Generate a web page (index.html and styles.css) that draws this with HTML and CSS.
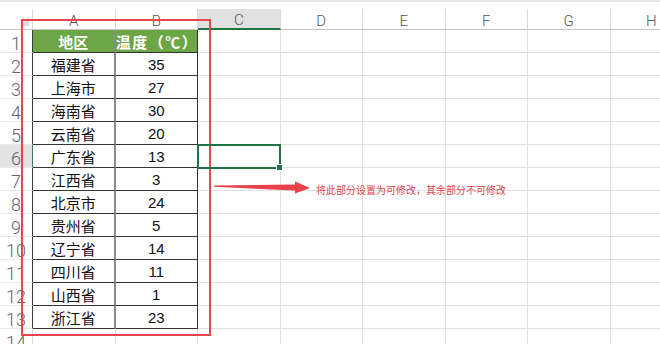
FILE: index.html
```html
<!DOCTYPE html>
<html lang="zh-CN">
<head>
    <meta charset="UTF-8">
    <title>区域温度</title>
    <link rel="stylesheet" href="styles.css">
</head>
<body>
    <div class="topbar"></div>
    <div class="sheet">
        <div class="corner"></div>
        <div class="col-head">A</div>
        <div class="col-head">B</div>
        <div class="col-head sel">C</div>
        <div class="col-head">D</div>
        <div class="col-head">E</div>
        <div class="col-head">F</div>
        <div class="col-head">G</div>
        <div class="col-head">H</div>

        <div class="row-head edge">1</div>
        <div class="data name head">地区</div>
        <div class="data head"><span class="unit">温度（℃）</span></div>
        <div class="cell"></div><div class="cell"></div><div class="cell"></div><div class="cell"></div><div class="cell"></div><div class="cell"></div>

        <div class="row-head edge">2</div>
        <div class="data name">福建省</div>
        <div class="data num">35</div>
        <div class="cell"></div><div class="cell"></div><div class="cell"></div><div class="cell"></div><div class="cell"></div><div class="cell"></div>

        <div class="row-head edge">3</div>
        <div class="data name">上海市</div>
        <div class="data num">27</div>
        <div class="cell"></div><div class="cell"></div><div class="cell"></div><div class="cell"></div><div class="cell"></div><div class="cell"></div>

        <div class="row-head edge">4</div>
        <div class="data name">海南省</div>
        <div class="data num">30</div>
        <div class="cell"></div><div class="cell"></div><div class="cell"></div><div class="cell"></div><div class="cell"></div><div class="cell"></div>

        <div class="row-head edge">5</div>
        <div class="data name">云南省</div>
        <div class="data num">20</div>
        <div class="cell"></div><div class="cell"></div><div class="cell"></div><div class="cell"></div><div class="cell"></div><div class="cell"></div>

        <div class="row-head edge sel">6</div>
        <div class="data name">广东省</div>
        <div class="data num">13</div>
        <div class="cell"></div><div class="cell"></div><div class="cell"></div><div class="cell"></div><div class="cell"></div><div class="cell"></div>

        <div class="row-head edge">7</div>
        <div class="data name">江西省</div>
        <div class="data num">3</div>
        <div class="cell"></div><div class="cell"></div><div class="cell"></div><div class="cell"></div><div class="cell"></div><div class="cell"></div>

        <div class="row-head edge">8</div>
        <div class="data name">北京市</div>
        <div class="data num">24</div>
        <div class="cell"></div><div class="cell"></div><div class="cell"></div><div class="cell"></div><div class="cell"></div><div class="cell"></div>

        <div class="row-head edge">9</div>
        <div class="data name">贵州省</div>
        <div class="data num">5</div>
        <div class="cell"></div><div class="cell"></div><div class="cell"></div><div class="cell"></div><div class="cell"></div><div class="cell"></div>

        <div class="row-head edge">10</div>
        <div class="data name">辽宁省</div>
        <div class="data num">14</div>
        <div class="cell"></div><div class="cell"></div><div class="cell"></div><div class="cell"></div><div class="cell"></div><div class="cell"></div>

        <div class="row-head edge">11</div>
        <div class="data name">四川省</div>
        <div class="data num">11</div>
        <div class="cell"></div><div class="cell"></div><div class="cell"></div><div class="cell"></div><div class="cell"></div><div class="cell"></div>

        <div class="row-head edge">12</div>
        <div class="data name">山西省</div>
        <div class="data num">1</div>
        <div class="cell"></div><div class="cell"></div><div class="cell"></div><div class="cell"></div><div class="cell"></div><div class="cell"></div>

        <div class="row-head edge">13</div>
        <div class="data name">浙江省</div>
        <div class="data num">23</div>
        <div class="cell"></div><div class="cell"></div><div class="cell"></div><div class="cell"></div><div class="cell"></div><div class="cell"></div>

        <div class="row-head">14</div>
        <div class="cell"></div><div class="cell"></div>
        <div class="cell"></div><div class="cell"></div><div class="cell"></div><div class="cell"></div><div class="cell"></div><div class="cell"></div>
    </div>

    <!-- overlays drawn on top of the sheet -->
    <div class="frame"></div>
    <div class="selection"></div>
    <svg class="arrow" width="100" height="16" viewBox="0 0 100 16">
        <polygon points="0,5.5 81,4.5 81,1.5 96,8 81,13.5 81,10.5 0,6.8" fill="#e8414a"/>
    </svg>
    <div class="note">将此部分设置为可修改，其余部分不可修改</div>
</body>
</html>
```

FILE: styles.css
```css
body {
    margin: 0;
    width: 660px;
    height: 344px;
    overflow: hidden;
    position: relative;
    background: #fff;
    font-family: "Noto Sans CJK SC", sans-serif;
}

.topbar {
    height: 7px;
    border-top: 2px solid #e6e6e6;
}

.sheet {
    display: grid;
    grid-template-columns: 33px repeat(8, 82.5px);
    grid-template-rows: 21px repeat(14, 23px);
}

.sheet > div {
    box-sizing: border-box;
}

.corner {
    position: relative;
    border-right: 1px solid #dadada;
    border-bottom: 1px solid #c4c4c4;
}

.corner::after {
    content: "";
    position: absolute;
    right: 3px;
    bottom: 3px;
    border-left: 9px solid transparent;
    border-bottom: 9px solid #dcdcdc;
}

.col-head {
    display: flex;
    align-items: center;
    justify-content: center;
    padding-top: 3px;
    font-family: Roboto, "Liberation Sans", sans-serif;
    font-weight: 300;
    font-size: 15px;
    color: #555;
    border-right: 1px solid #dadada;
    border-bottom: 1px solid #c4c4c4;
}

.col-head.sel {
    background: #e1e1e1;
    border-bottom: 2px solid #217346;
}

.row-head {
    display: flex;
    align-items: center;
    justify-content: center;
    padding-top: 4px;
    font-family: Roboto, "Liberation Sans", sans-serif;
    font-weight: 300;
    font-size: 18px;
    color: #666;
    border-right: 1px solid #dadada;
    border-bottom: 1px solid #e8e8e8;
}

.row-head.edge {
    border-right-color: #3a3a3a;
}

.row-head.sel {
    background: #e3e3e3;
    border-right-color: #3f7a5a;
}

.cell {
    border-right: 1px solid #e1e1e1;
    border-bottom: 1px solid #e1e1e1;
}

.data {
    display: flex;
    align-items: center;
    justify-content: center;
    white-space: nowrap;
    font-size: 15px;
    color: #111;
    border-right: 1px solid #333;
    border-bottom: 1px solid #333;
}

.data.name {
    border-right: 2px solid #8c8c8c;
}

.data.num {
    font-family: "Liberation Sans", "Noto Sans CJK SC", sans-serif;
    font-size: 15px;
}

.data.head {
    background: #6ca646;
    color: #fff;
    font-weight: bold;
}

.unit {
    letter-spacing: 1.5px;
    margin-right: -1.5px;
}

.frame {
    position: absolute;
    left: 21px;
    top: 19px;
    width: 190px;
    height: 317px;
    box-sizing: border-box;
    border: 2px solid #e8464e;
}

.selection {
    position: absolute;
    left: 197px;
    top: 144px;
    width: 84px;
    height: 25px;
    box-sizing: border-box;
    border: 2px solid #217346;
}

.selection::after {
    content: "";
    position: absolute;
    right: -4px;
    bottom: -4px;
    width: 5px;
    height: 5px;
    background: #217346;
    border: 1px solid #fff;
}

.arrow {
    position: absolute;
    left: 214px;
    top: 180px;
}

.note {
    position: absolute;
    left: 316px;
    top: 182px;
    font-size: 10px;
    line-height: 16px;
    color: #e2454b;
}
```
